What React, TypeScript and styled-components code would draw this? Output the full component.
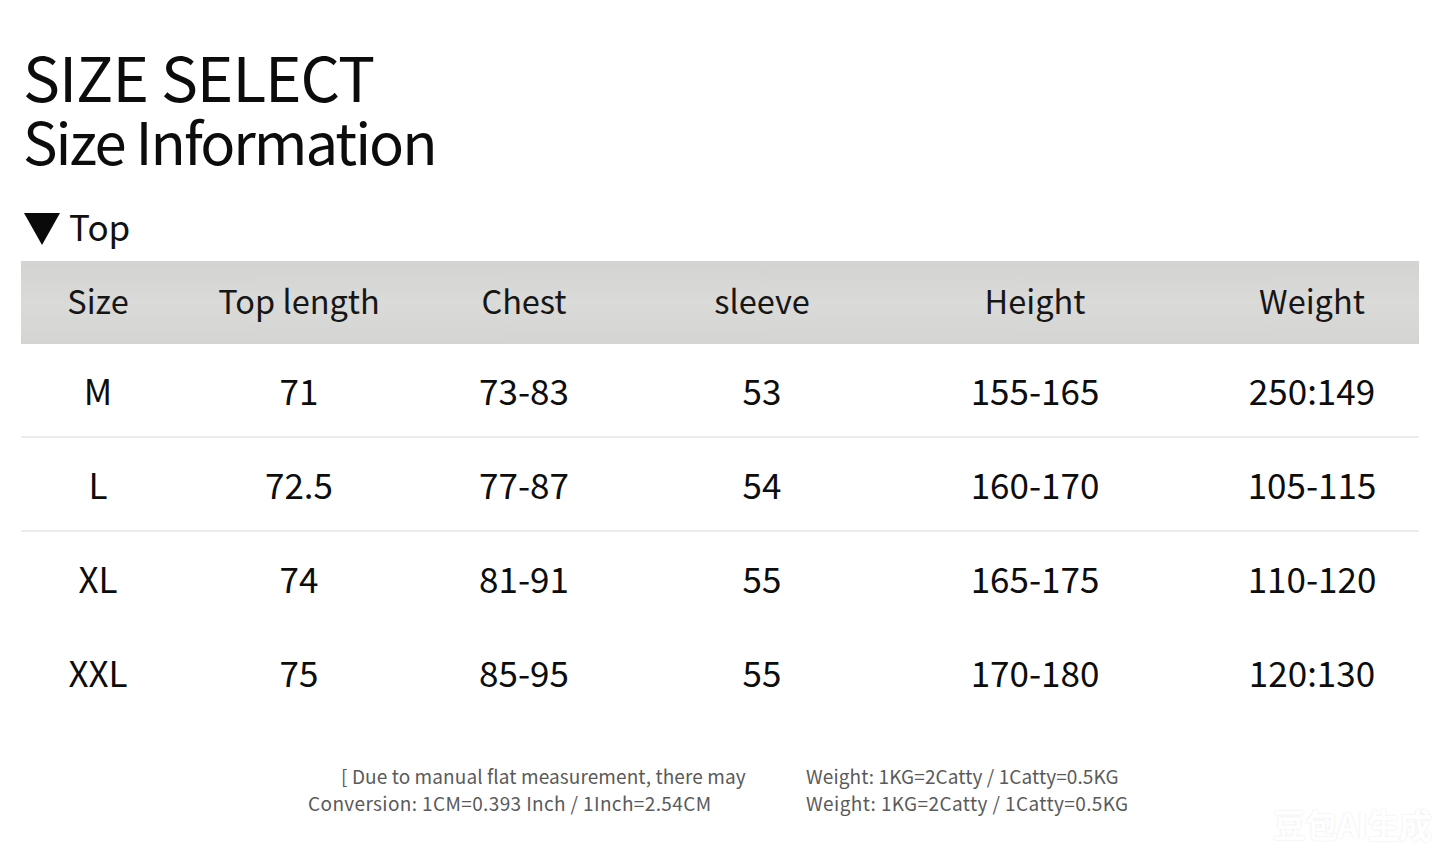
import React from "react";
import styled, { createGlobalStyle } from "styled-components";

const Global = createGlobalStyle`
  html, body { margin: 0; padding: 0; background: #ffffff; }
  body { font-family: "Noto Sans CJK SC", "Noto Sans", sans-serif; color: #111; }
`;

const Page = styled.div`
  position: relative;
  width: 1445px;
  height: 860px;
  overflow: hidden;
  background: #ffffff;
  padding: 42px 26px 0 21px;
  box-sizing: border-box;
`;

const Heading = styled.h1`
  margin: 0 0 0 2px;
  font-weight: 400;
  font-size: 62px;
  line-height: 66px;
  letter-spacing: -1px;
  color: #0c0c0c;
`;

const SubHeading = styled.h2`
  margin: 0 0 0 2px;
  font-weight: 400;
  font-size: 58px;
  line-height: 64px;
  letter-spacing: -2px;
  color: #0c0c0c;
`;

const SectionLabel = styled.div`
  display: flex;
  align-items: center;
  gap: 9px;
  margin: 30px 0 11px 3px;
  font-size: 35px;
  line-height: 48px;
  color: #111;
`;

const Triangle = styled.span`
  width: 0;
  height: 0;
  border-left: 18px solid transparent;
  border-right: 18px solid transparent;
  border-top: 32px solid #0a0a0a;
  margin-top: 6px;
`;

const Table = styled.div`
  width: 1398px;
`;

const cols = "154px 248px 202px 274px 272px 248px";

const HeaderRow = styled.div`
  display: grid;
  grid-template-columns: ${cols};
  height: 83px;
  padding-bottom: 6px;
  box-sizing: border-box;
  align-items: center;
  background: linear-gradient(180deg, #d3d3d2 0%, #dadad9 50%, #d4d4d3 100%);
`;

const Row = styled.div<{ $line?: boolean }>`
  display: grid;
  grid-template-columns: ${cols};
  height: 94px;
  align-items: center;
  border-bottom: 2px solid ${(p) => (p.$line ? "#ebebea" : "transparent")};
  box-sizing: border-box;
`;

const Cell = styled.div<{ $head?: boolean }>`
  text-align: center;
  font-size: ${(p) => (p.$head ? "32.5px" : "35px")};
  line-height: 40px;
  color: ${(p) => (p.$head ? "#161616" : "#0d0d0d")};
  &:nth-child(6) { padding-left: 34px; }
`;

const Notes = styled.div`
  display: grid;
  grid-template-columns: 498px 340px;
  margin: 45px 0 0 287px;
  row-gap: 5px;
  font-size: 19px;
  line-height: 22px;
  color: #5a5a5a;
`;

const Note = styled.div<{ $indent?: number; $spacing?: number }>`
  padding-left: ${(p) => p.$indent ?? 0}px;
  letter-spacing: ${(p) => p.$spacing ?? 0}px;
  white-space: nowrap;
`;

const Watermark = styled.div`
  position: absolute;
  right: 14px;
  bottom: 18px;
  font-size: 33px;
  font-weight: 700;
  line-height: 36px;
  color: #ffffff;
  text-shadow: 0 0 2px rgba(0, 0, 0, 0.12);
  letter-spacing: -1px;
`;

const headers = ["Size", "Top length", "Chest", "sleeve", "Height", "Weight"];
const rows = [
  ["M", "71", "73-83", "53", "155-165", "250:149"],
  ["L", "72.5", "77-87", "54", "160-170", "105-115"],
  ["XL", "74", "81-91", "55", "165-175", "110-120"],
  ["XXL", "75", "85-95", "55", "170-180", "120:130"],
];

export default function App() {
  return (
    <Page>
      <Global />
      <Heading>SIZE SELECT</Heading>
      <SubHeading>Size Information</SubHeading>
      <SectionLabel>
        <Triangle />
        Top
      </SectionLabel>
      <Table>
        <HeaderRow>
          {headers.map((h) => (
            <Cell $head key={h}>{h}</Cell>
          ))}
        </HeaderRow>
        {rows.map((r, i) => (
          <Row key={r[0]} $line={i < 2}>
            {r.map((c, j) => (
              <Cell key={j}>{c}</Cell>
            ))}
          </Row>
        ))}
      </Table>
      <Notes>
        <Note $indent={33} $spacing={0.1}>[ Due to manual flat measurement, there may</Note>
        <Note $spacing={0.1}>Weight: 1KG=2Catty / 1Catty=0.5KG</Note>
        <Note $spacing={0.37}>Conversion: 1CM=0.393 Inch / 1Inch=2.54CM</Note>
        <Note $spacing={0.4}>Weight: 1KG=2Catty / 1Catty=0.5KG</Note>
      </Notes>
      <Watermark>豆包AI生成</Watermark>
    </Page>
  );
}
